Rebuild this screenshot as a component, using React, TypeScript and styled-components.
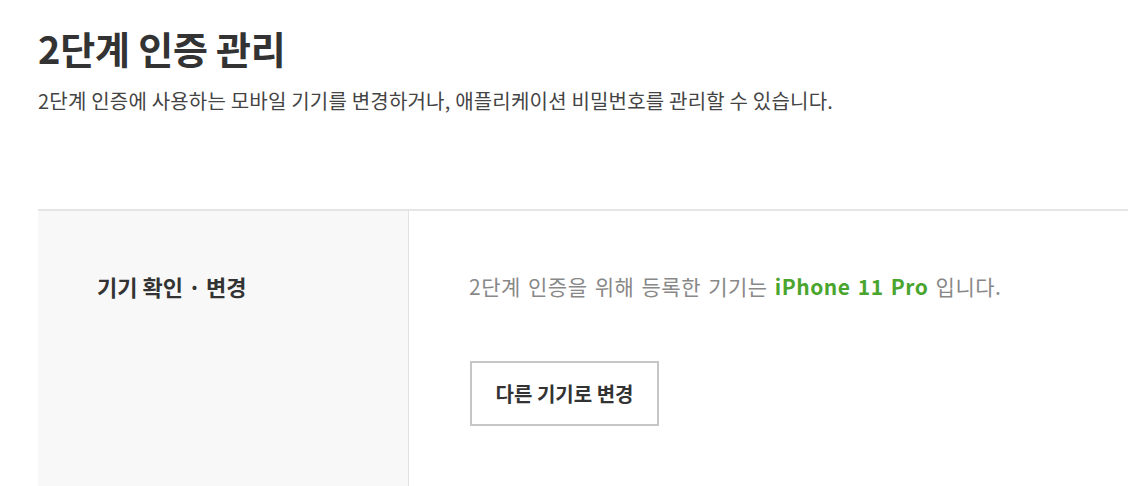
import React from "react";
import styled, { createGlobalStyle } from "styled-components";

const GlobalStyle = createGlobalStyle`
  html, body {
    margin: 0;
    padding: 0;
    background: #fff;
    font-family: "Noto Sans CJK KR", "Noto Sans", sans-serif;
  }
`;

const Page = styled.div`
  padding: 21px 0 0 38px;
  height: 486px;
  box-sizing: border-box;
  display: flex;
  flex-direction: column;
  overflow: hidden;
`;

const Title = styled.h1`
  margin: 0;
  font-size: 38px;
  font-weight: 700;
  line-height: 54px;
  color: #333;
  letter-spacing: -0.2px;
`;

const Subtitle = styled.p`
  margin: 12px 0 0;
  font-size: 20px;
  line-height: 28px;
  color: #444;
  letter-spacing: 0.2px;
`;

const Table = styled.div`
  margin-top: 94px;
  flex: 1;
  display: flex;
  border-top: 2px solid #e5e5e5;
`;

const HeadCell = styled.div`
  width: 371px;
  flex: none;
  background: #f8f8f8;
  border-right: 1px solid #e2e2e2;
  padding: 60px 0 0 59px;
  box-sizing: border-box;
`;

const Label = styled.span`
  font-size: 22px;
  font-weight: 700;
  color: #333;
  line-height: 30px;
`;

const BodyCell = styled.div`
  flex: 1;
  padding: 60px 0 0 60px;
`;

const Info = styled.p`
  margin: 0;
  font-size: 21px;
  line-height: 30px;
  color: #888;
  letter-spacing: 0.5px;
  word-spacing: 2px;
`;

const Device = styled.strong`
  color: #4aa52e;
  font-weight: 700;
`;

const ChangeButton = styled.button`
  margin-top: 60px;
  margin-left: 1px;
  width: 189px;
  height: 65px;
  background: #fff;
  border: 2px solid #c6c6c6;
  font-family: inherit;
  font-size: 20px;
  font-weight: 700;
  color: #333;
  cursor: pointer;
`;

export default function App() {
  return (
    <>
      <GlobalStyle />
      <Page>
        <Title>2단계 인증 관리</Title>
        <Subtitle>
          2단계 인증에 사용하는 모바일 기기를 변경하거나, 애플리케이션 비밀번호를 관리할 수 있습니다.
        </Subtitle>
        <Table>
          <HeadCell>
            <Label>기기 확인 · 변경</Label>
          </HeadCell>
          <BodyCell>
            <Info>
              2단계 인증을 위해 등록한 기기는 <Device>iPhone 11 Pro</Device> 입니다.
            </Info>
            <ChangeButton>다른 기기로 변경</ChangeButton>
          </BodyCell>
        </Table>
      </Page>
    </>
  );
}
